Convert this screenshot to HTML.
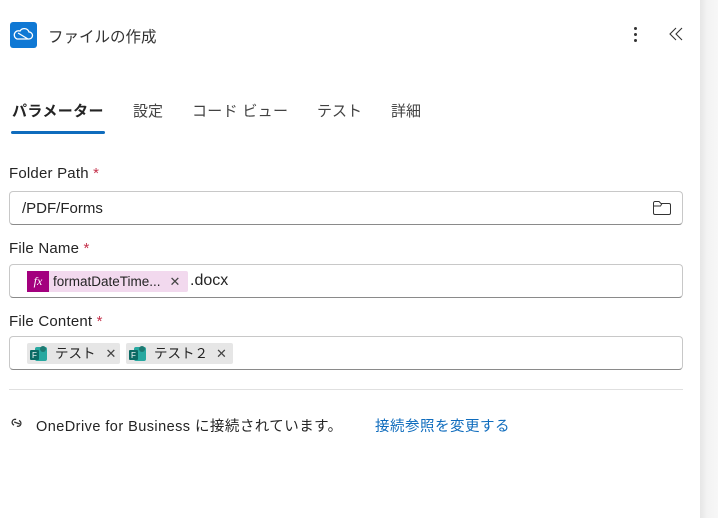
<!DOCTYPE html>
<html><head><meta charset="utf-8"><style>
*{box-sizing:border-box;margin:0;padding:0}
body{width:718px;height:518px;background:#fff;font-family:"Liberation Sans","Noto Sans CJK JP",sans-serif;color:#242424;position:relative;overflow:hidden}
.edge{position:absolute;left:700px;top:0;width:18px;height:518px;background:linear-gradient(90deg,#e6e6e6,#f3f3f3 40%,#f7f7f7)}
.abs{position:absolute}
.logo{left:10px;top:22px;width:27px;height:26px;background:#0f78d4;border-radius:3px}
.title{left:48px;top:25px;font-size:15.5px;color:#333}
.tab{top:100px;font-size:15px;color:#424242}
.label{left:9px;font-size:15px;color:#242424;letter-spacing:0.2px}
.label span{color:#c4314b}
.box{left:9px;width:674px;height:34px;border:1px solid #c8c8c8;border-bottom:1px solid #8a8a8a;border-radius:4px}
.chip{position:absolute;top:6px;height:21px;background:#e6e6e6;font-size:13.5px;line-height:21px;display:flex;align-items:center;border-radius:2px}
.x{font-size:13px;color:#444}
</style></head><body>
<div class="edge"></div>
<div class="abs logo"><svg width="27" height="26" viewBox="0 0 27 26"><path d="M7 17 h12 a3.5 3.5 0 0 0 0-7 a5 5 0 0 0-9-1 a4 4 0 0 0-3 8z M8 11 l10 6" fill="none" stroke="#fff" stroke-width="1.3"/></svg></div>
<div class="abs title">ファイルの作成</div>
<div class="abs" style="left:634px;top:27px;width:4px"><div style="width:3px;height:3px;background:#333;border-radius:50%;margin-bottom:3px"></div><div style="width:3px;height:3px;background:#333;border-radius:50%;margin-bottom:3px"></div><div style="width:3px;height:3px;background:#333;border-radius:50%"></div></div>
<svg class="abs" style="left:669px;top:26px" width="14" height="16"><path d="M7 2 L1 8 L7 14 M13 2 L7 8 L13 14" fill="none" stroke="#333" stroke-width="1.1"/></svg>
<div class="abs tab" style="left:12px;font-weight:bold;color:#242424;letter-spacing:0.4px">パラメーター</div>
<div class="abs" style="left:11px;top:131px;width:94px;height:3px;background:#0f6cbd;border-radius:2px"></div>
<div class="abs tab" style="left:133px">設定</div>
<div class="abs tab" style="left:192px;letter-spacing:0.3px">コード ビュー</div>
<div class="abs tab" style="left:317px">テスト</div>
<div class="abs tab" style="left:391px">詳細</div>

<div class="abs label" style="top:165px">Folder Path <span>*</span></div>
<div class="abs box" style="top:191px"><div class="abs" style="left:12px;top:8px;font-size:15px">/PDF/Forms</div>
<svg class="abs" style="left:642px;top:8px" width="20" height="16"><path d="M1.5 3 a1.5 1.5 0 0 1 1.5-1.5 h4 l2 2 h8 a1.5 1.5 0 0 1 1.5 1.5 v8 a1.5 1.5 0 0 1-1.5 1.5 h-14 a1.5 1.5 0 0 1-1.5-1.5z M1.5 6 h7 l1.5-2.5" fill="none" stroke="#333" stroke-width="1"/></svg></div>

<div class="abs label" style="top:240px">File Name <span>*</span></div>
<div class="abs box" style="top:264px">
<div class="chip" style="left:17px;background:#f2d9ee;padding-right:8px"><div style="width:22px;height:21px;background:#a3007e;color:#fff;font-family:'Liberation Serif',serif;font-style:italic;text-align:center;font-size:12px">fx</div><span style="margin-left:4px">formatDateTime...</span><span class="x" style="margin-left:9px">✕</span></div>
<div class="abs" style="left:180px;top:7px;font-size:16px">.docx</div></div>

<div class="abs label" style="top:313px">File Content <span>*</span></div>
<div class="abs box" style="top:336px">
<div class="chip" style="left:17px;width:93px"><svg style="margin-left:2px" width="20" height="18"><rect x="6" y="2" width="12" height="14" rx="2" fill="#28a8a0"/><circle cx="14" cy="4" r="3" fill="#1d7a72"/><rect x="1" y="5" width="9" height="10" rx="1" fill="#0b6a64"/><text x="3" y="13" font-size="8" fill="#fff" font-family="Liberation Sans">F</text></svg><span style="margin-left:6px">テスト</span><span class="x" style="margin-left:10px">✕</span></div>
<div class="chip" style="left:116px;width:107px"><svg style="margin-left:2px" width="20" height="18"><rect x="6" y="2" width="12" height="14" rx="2" fill="#28a8a0"/><circle cx="14" cy="4" r="3" fill="#1d7a72"/><rect x="1" y="5" width="9" height="10" rx="1" fill="#0b6a64"/><text x="3" y="13" font-size="8" fill="#fff" font-family="Liberation Sans">F</text></svg><span style="margin-left:6px">テスト２</span><span class="x" style="margin-left:8px">✕</span></div></div>

<div class="abs" style="left:9px;top:389px;width:674px;height:1px;background:#e0e0e0"></div>
<svg class="abs" style="left:9px;top:416px" width="16" height="14"><path d="M6 4 a3 3 0 1 0 0 6 M9 10 a3 3 0 1 0 0-6 M5 7 h6" fill="none" stroke="#333" stroke-width="1.3" transform="rotate(20 8 7)"/></svg>
<div class="abs" style="left:36px;top:415px;font-size:14.5px;letter-spacing:0.45px">OneDrive for Business に接続されています。</div>
<div class="abs" style="left:375px;top:415px;font-size:14.5px;color:#0f6cbd;letter-spacing:0.5px">接続参照を変更する</div>
</body></html>
